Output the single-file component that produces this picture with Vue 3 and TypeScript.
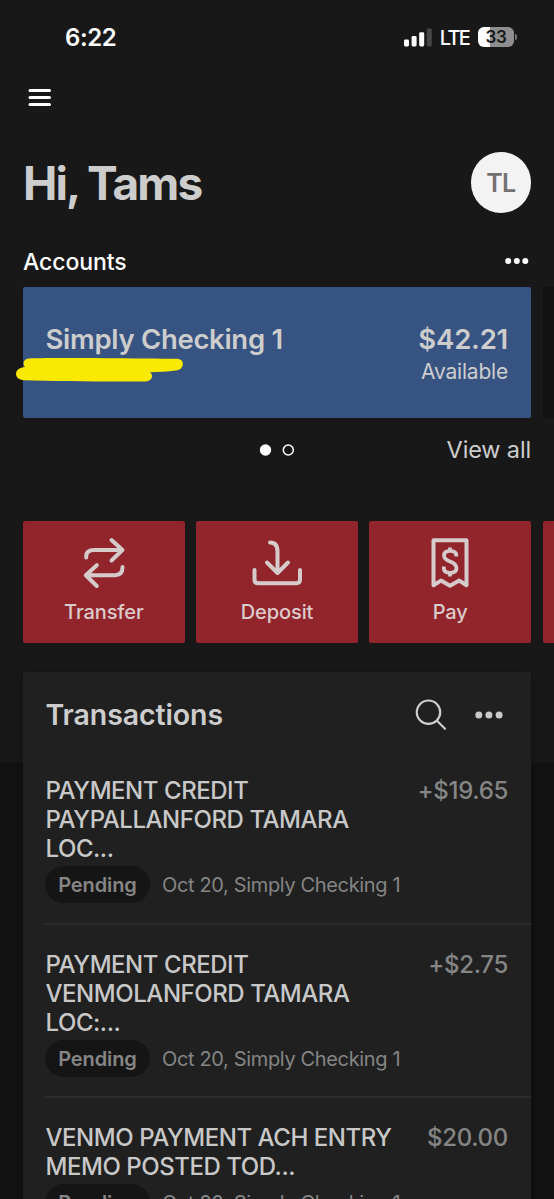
<script setup lang="ts">
interface Transaction {
  id: number
  lines: string[]
  amount: string
  status: string
  detail: string
}

const actions: string[] = ['Transfer', 'Deposit', 'Pay']

const transactions: Transaction[] = [
  { id: 1, lines: ['PAYMENT CREDIT', 'PAYPALLANFORD TAMARA', 'LOC...'], amount: '+$19.65', status: 'Pending', detail: 'Oct 20, Simply Checking 1' },
  { id: 2, lines: ['PAYMENT CREDIT', 'VENMOLANFORD TAMARA', 'LOC:...'], amount: '+$2.75', status: 'Pending', detail: 'Oct 20, Simply Checking 1' },
  { id: 3, lines: ['VENMO PAYMENT ACH ENTRY', 'MEMO POSTED TOD...'], amount: '$20.00', status: 'Pending', detail: 'Oct 20, Simply Checking 1' },
]
</script>

<template>
  <main class="screen">
    <header class="status-bar">
      <span class="clock">6:22</span>
      <div class="indicators">
        <svg class="signal" width="28" height="19" viewBox="0 0 28 19">
          <rect x="0" y="11.5" width="5" height="7" rx="1.4" fill="#fff" />
          <rect x="7.6" y="8" width="5" height="10.500" rx="1.4" fill="#fff" />
          <rect x="15.200" y="4.200" width="5" height="14.300" rx="1.4" fill="#fff" />
          <rect x="22.800" y="0.500" width="5" height="18" rx="1.4" fill="#464646" />
        </svg>
        <span class="network">LTE</span>
        <div class="battery"><span class="battery-level">33</span></div>
        <i class="battery-tip"></i>
      </div>
    </header>

    <nav class="menu">
      <svg width="24" height="18" viewBox="0 0 24 18" stroke="#fff" stroke-width="3" stroke-linecap="round">
        <path d="M2 2.500H21.500M2 9.500H21.500M2 16.500H21.500" />
      </svg>
    </nav>

    <section class="greeting">
      <h1>Hi, Tams</h1>
      <div class="avatar"><span>TL</span></div>
    </section>

    <section class="accounts-head">
      <h2>Accounts</h2>
      <svg width="24" height="8" viewBox="0 0 24 8" fill="#fff">
        <circle cx="3.200" cy="4" r="3" /><circle cx="11.800" cy="4" r="3" /><circle cx="20.300" cy="4" r="3" />
      </svg>
    </section>

    <section class="carousel">
      <article class="account">
        <h3>Simply Checking 1</h3>
        <div class="balance">
          <strong>$42.21</strong>
          <span>Available</span>
        </div>
        <svg class="highlight" width="170" height="28" viewBox="0 0 170 28" fill="#fae900">
          <path d="M13 1.500C40 .5 115 1.500 160 1.800C165 1.800 167 4 166.800 7.500C166.500 11 164 13 160 13.500C151 14.800 143 15 134 15.300C138 18.300 136 24.200 130 24.400C98 25 42 24.200 8 23.300C3 23 0 20.200 0 16.800C0 13 4 10.500 9 10C6 6.500 8 1.700 13 1.500Z" />
        </svg>
      </article>
      <div class="next-account"></div>
    </section>

    <section class="pager">
      <svg class="dots" width="36" height="14" viewBox="0 0 36 14">
        <circle cx="6.500" cy="7" r="5.700" fill="#fff" />
        <circle cx="29.300" cy="7" r="5" fill="none" stroke="#fff" stroke-width="1.500" />
      </svg>
      <span class="view-all">View all</span>
    </section>

    <section class="actions">
      <button v-for="action in actions" :key="action" class="action" type="button">
        <svg width="56" height="54" viewBox="0 0 56 54" fill="none" stroke="#d6cbcb" stroke-width="4" stroke-linecap="round" stroke-linejoin="round">
          <g v-if="action === 'Transfer'">
            <path d="M10.200 21.500V20.500Q10.200 14 18 14H46M35.500 4L46.500 14L35.500 24.500" />
            <path d="M46.500 31V31.500Q46.500 39.200 38.500 39.200H10M20.800 29.200L9.800 39.200L20.800 50" />
          </g>
          <g v-else-if="action === 'Deposit'">
            <path d="M21 6.500C26.500 6.500 28.500 10 28.500 15.500V37M18 26.500L28.500 37L39 26.500" />
            <path d="M5.500 34V43.500Q5.500 47.200 9 47.200H47.500Q51 47.200 51 43.500V34" />
          </g>
          <g v-else stroke-linecap="butt">
            <path d="M11.500 4.200H44.500V49.200L37.300 44.600L28 49.800L19 44.600L11.500 49.200Z" />
            <path stroke-width="3.800" d="M34.300 20.500V19.500C34.300 16.500 32 14.800 28 14.800C24 14.800 22 16.500 22 19.600C22 23 24.500 24.200 28 25.500C32 27 34.500 28.500 34.500 32C34.500 35.200 32 36.800 28 36.800C24 36.800 21.800 35.200 21.800 32V30.500M28 11.500V15M28 36.500V40.500" />
          </g>
        </svg>
        <span>{{ action }}</span>
      </button>
      <div class="action"></div>
    </section>

    <section class="panel">
      <header class="panel-head">
        <h2>Transactions</h2>
        <svg class="search" width="32" height="32" viewBox="0 0 32 32" fill="none" stroke="#cdcdcd" stroke-width="2.200" stroke-linecap="round">
          <circle cx="13.500" cy="13.200" r="11.700" /><path d="M22 21.800L30 29.800" />
        </svg>
        <svg width="28" height="8" viewBox="0 0 28 8" fill="#c9c9c9">
          <circle cx="3.800" cy="4" r="3.500" /><circle cx="13.900" cy="4" r="3.500" /><circle cx="24.100" cy="4" r="3.500" />
        </svg>
      </header>
      <ul>
        <li v-for="item in transactions" :key="item.id">
          <div class="row">
            <p class="name"><span v-for="line in item.lines" :key="line">{{ line }}</span></p>
            <span class="amount">{{ item.amount }}</span>
          </div>
          <div class="meta">
            <span class="pill">{{ item.status }}</span>
            <span class="detail">{{ item.detail }}</span>
          </div>
        </li>
      </ul>
    </section>
  </main>
</template>

<style>
body {
  margin: 0;
  overflow: hidden;
  background: #181818;
}
</style>

<style scoped>
.screen {
  box-sizing: border-box;
  display: flex;
  flex-direction: column;
  width: 554px;
  height: 1199px;
  overflow: hidden;
  background: linear-gradient(#181818 763px, #121212 763px);
  font-family: Inter, "Liberation Sans", sans-serif;
  color: #cdcdcd;
}
.screen > * {
  flex-shrink: 0;
}
h1, h2, h3, p, ul {
  margin: 0;
  padding: 0;
}
ul {
  list-style: none;
}
svg {
  display: block;
  flex: none;
}
span {
  white-space: nowrap;
}
.status-bar {
  display: flex;
  align-items: center;
  justify-content: space-between;
  height: 74px;
  padding: 0 37px 0 65px;
  color: #fff;
}
.clock {
  font-size: 24px;
  font-weight: 600;
  letter-spacing: -0.4px;
}
.indicators {
  display: flex;
  align-items: center;
}
.network {
  margin: 1px 9px 0 8px;
  font-size: 20px;
  font-weight: 500;
  letter-spacing: -1.8px;
}
.battery {
  display: flex;
  align-items: center;
  justify-content: center;
  width: 36px;
  height: 20px;
  border-radius: 6px;
  background: linear-gradient(90deg, #fff 12px, #8e8e8e 12px);
  color: #181818;
  font-size: 17px;
  font-weight: 600;
  letter-spacing: -0.4px;
}
.battery-tip {
  width: 2px;
  height: 6px;
  margin-left: 1px;
  border-radius: 0 3px 3px 0;
  background: #777;
}
.menu {
  display: flex;
  align-items: center;
  height: 46px;
  padding-left: 28px;
}
.greeting {
  display: flex;
  align-items: center;
  justify-content: space-between;
  height: 61px;
  margin: 32px 0 25px;
  padding: 0 23px;
}
h1 {
  font-size: 46px;
  line-height: 60px;
  letter-spacing: -1.9px;
}
.avatar {
  display: grid;
  place-items: center;
  width: 60.500px;
  height: 60.500px;
  border-radius: 50%;
  background: #f3f3f3;
  color: #727272;
  font-size: 25px;
  font-weight: 600;
  letter-spacing: -0.8px;
}
.accounts-head {
  display: flex;
  align-items: center;
  justify-content: space-between;
  height: 46px;
  padding: 0 25px 0 23px;
  color: #fff;
}
.accounts-head h2 {
  margin-top: 1px;
  font-size: 23px;
  font-weight: 500;
  letter-spacing: -0.1px;
}
.carousel {
  display: flex;
  gap: 12px;
  height: 131px;
  margin-top: 3px;
  padding-left: 23px;
}
.account {
  position: relative;
  box-sizing: border-box;
  display: flex;
  flex: none;
  justify-content: space-between;
  width: 508px;
  padding: 35px 23px 0 22.500px;
  border-radius: 2px;
  background: #365381;
}
.account h3 {
  font-size: 27.500px;
  font-weight: 600;
  line-height: 34px;
  letter-spacing: -0.300px;
}
.balance {
  display: flex;
  flex-direction: column;
  align-items: flex-end;
}
.balance strong {
  font-size: 27.500px;
  font-weight: 600;
  line-height: 34px;
  letter-spacing: -0.200px;
}
.balance span {
  font-size: 21px;
  line-height: 31px;
  letter-spacing: -0.200px;
}
.highlight {
  position: absolute;
  left: -7px;
  top: 69.500px;
}
.next-account {
  flex: 1;
  background: #121212;
}
.pager {
  display: grid;
  grid-template-columns: 1fr 36px 1fr;
  align-items: center;
  height: 64px;
  padding: 0 23px;
}
.dots {
  grid-column: 2;
}
.view-all {
  grid-column: 3;
  justify-self: end;
  margin-top: -1px;
  font-size: 23.500px;
  letter-spacing: -0.150px;
}
.actions {
  display: flex;
  gap: 11.500px;
  height: 122px;
  margin-top: 39px;
  padding-left: 23px;
  overflow: hidden;
}
.action {
  box-sizing: border-box;
  display: flex;
  flex: none;
  flex-direction: column;
  align-items: center;
  width: 161.700px;
  padding: 15px 0 0;
  border: 0;
  border-radius: 2px;
  background: #91252b;
  color: #dccbcb;
  font: 500 20px/26px Inter, "Liberation Sans", sans-serif;
  letter-spacing: -0.1px;
}
.action span {
  margin-top: 9px;
}
.panel {
  width: 508px;
  height: 540px;
  margin: 29px 0 0 23px;
  background: #202020;
  box-shadow: 0 0 8px rgb(0 0 0 / 22%);
}
.panel-head {
  display: flex;
  align-items: center;
  height: 86px;
  padding: 0 28.500px 0 22.500px;
  margin-bottom: -7px;
}
.panel-head h2 {
  flex: 1;
  margin-top: -1px;
  font-size: 28.500px;
  font-weight: 600;
  letter-spacing: -0.100px;
}
.search {
  margin-right: 27.500px;
}
li {
  display: flex;
  flex-direction: column;
  margin-left: 22px;
  padding: 25px 0 19.500px;
  border-bottom: 2px solid #2b2b2b;
}
.row {
  display: flex;
  justify-content: space-between;
  padding-right: 23px;
  font-size: 24px;
  font-weight: 550;
  line-height: 29px;
}
.name {
  margin-left: 0.5px;
  color: #c8c8c8;
  letter-spacing: -0.450px;
}
.name span {
  display: block;
}
.amount {
  color: #858585;
  letter-spacing: -0.300px;
}
.meta {
  display: flex;
  align-items: center;
  gap: 12px;
  margin-top: 3px;
  color: #858585;
  font-size: 20px;
}
.detail {
  margin-top: 1px;
  letter-spacing: -0.350px;
}
.pill {
  box-sizing: border-box;
  width: 105px;
  height: 37px;
  border-radius: 19px;
  background: #151515;
  font-weight: 600;
  line-height: 38px;
  letter-spacing: -0.100px;
  text-align: center;
}
</style>
